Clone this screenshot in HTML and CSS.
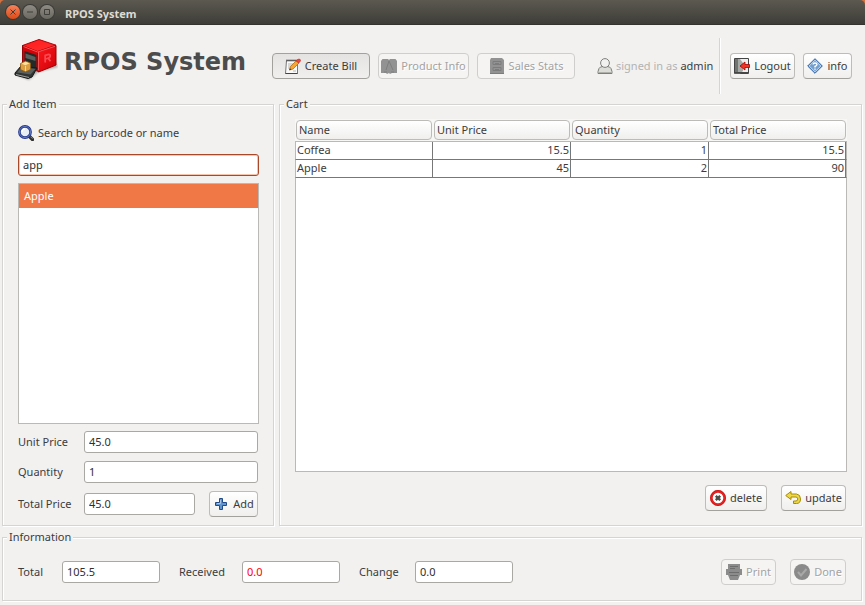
FILE: index.html
```html
<!DOCTYPE html>
<html lang="en">
<head>
<meta charset="utf-8">
<title>RPOS System</title>
<link rel="stylesheet" href="styles.css">
</head>
<body>
<div class="titlebar">
  <div class="titlebar-inner">
    <button class="win win-close" type="button" aria-label="Close"><svg viewBox="0 0 14 14"><path d="M4.500 4.500l5 5M9.500 4.500l-5 5"/></svg></button>
    <button class="win" type="button" aria-label="Minimize"><svg viewBox="0 0 14 14"><path d="M4 7h6"/></svg></button>
    <button class="win" type="button" aria-label="Maximize"><svg viewBox="0 0 14 14"><path d="M4.500 4.500h5v5h-5z"/></svg></button>
    <span class="titlebar-text">RPOS System</span>
  </div>
</div>

<header class="header">
  <div class="brand">
    <svg class="logo" viewBox="0 0 44 44">
      <defs>
        <linearGradient id="lt" x1="0" y1="0" x2="1" y2="1"><stop offset="0" stop-color="#ff1c1c"/><stop offset="1" stop-color="#ff2f2f"/></linearGradient>
        <linearGradient id="lr" x1="0" y1="0" x2="1" y2="1"><stop offset="0" stop-color="#ff1a1e"/><stop offset="1" stop-color="#cc0007"/></linearGradient>
        <filter id="soft" x="-20%" y="-20%" width="140%" height="140%"><feGaussianBlur stdDeviation="1"/></filter>
      </defs>
      <path d="M2 37l13 5 9-8 20-5-3-5-20 3-12 2z" fill="#888" opacity=".7" filter="url(#soft)"/>
      <path d="M8.500 7.500l15 5.500 1 20.500-5-2-11-4z" fill="#d30309" stroke="#930006"/>
      <path d="M10.500 13l12 4v15l-12-6z" fill="#232a28"/>
      <path d="M11.500 15.500l10 3.500v4l-10-3z" fill="#59605e"/>
      <path d="M23.500 13.500L42 7.500v19.500L24.500 34z" fill="url(#lr)" stroke="#a00004"/>
      <path d="M8.500 7.500L25 1.500 42 7.200 23.500 13.500z" fill="url(#lt)" stroke="#b00006"/>
      <path d="M9.500 8.500l14 5.500L41 8.300M24.500 14v18.500" fill="none" stroke="#ff6a6a" stroke-width=".8"/>
      <path d="M31.200 24.500V17.500l3.300-1.200q2 0 1.700 2-.4 1.500-2 2l2.300 3M31.500 21l3-1" fill="none" stroke="#ff4850" stroke-width="1.800"/>
      <path d="M1 35l6-7 16 2-5 9-4 1.500L1 37z" fill="#303332" stroke="#171918"/>
      <path d="M3 34.500l4.500-5.500 14 2-5 5.500z" fill="#5a5f5d"/>
      <path d="M2 36.500l13 3" stroke="#9a9e9c"/>
      <path d="M6.500 25.500l5-2.500 5 2v6.500l-5 2.500-5-2.500z" fill="#dca043" stroke="#8e5c12" stroke-width=".8"/>
      <path d="M7.500 25.700l4-2 4 1.600-4 2z" fill="#ffe0a0"/>
      <path d="M11.500 28v5" stroke="#ffd891"/>
    </svg>
    <h1>RPOS System</h1>
  </div>
  <nav class="nav">
    <button class="btn btn-main pressed" type="button">
      <svg class="icon" viewBox="0 0 16 16"><path d="M1.500 2.500h11v13h-12z" fill="#fafafa" stroke="#777"/><path d="M1.500 2.500h11" stroke="#444" stroke-width="2" stroke-dasharray="1 1"/><path d="M3 6h7M3 8h6M3 10h3M8 13h3" stroke="#b5b5b5"/><path d="M.5 15.500h12" stroke="#444"/><path d="M4.500 12l1-3.500 6-6 2.500 2.500-6 6z" fill="#f7a634" stroke="#b56e14" stroke-width=".8"/><path d="M4.300 12.200l.6-2 1.500 1.300z" fill="#333"/><path d="M11 3l2-1.800q2.500-.7 2.700 1.500L13.800 5z" fill="#e64848" stroke="#bf2929" stroke-width=".6"/></svg>
      Create Bill</button>
    <button class="btn btn-product" type="button" disabled>
      <svg class="icon" viewBox="0 0 16 16"><path d="M0 3l1.500-2H7l1 1 1-1h5.500L16 3v12h-5l-2 1-1-1-2 1-1-1H0z" fill="#929292"/><path d="M8 3L5 12M8 3l4 9M3 14h3M10 14h3" stroke="#7e7e7e"/></svg>
      Product Info</button>
    <button class="btn btn-main" type="button" disabled>
      <svg class="icon" viewBox="0 0 16 16"><path d="M2 0h11l2 2v14H1V2z" fill="#929292"/><path d="M4 3.500h8v3H4zM4 9.500h8v3H4z" fill="none" stroke="#7c7c7c"/><path d="M6 5.500h4M6 11.500h4M1 15.500h14" stroke="#7c7c7c"/></svg>
      Sales Stats</button>
    <div class="user">
      <svg class="icon" viewBox="0 0 16 16"><path d="M2 10.500Q3 8.500 6 8.500h4q3 0 4 2l1 3v2H1v-2z" fill="#dcdcd8" stroke="#7d7f7a"/><circle cx="8" cy="5" r="4.400" fill="#f1f1ef" stroke="#7d7f7a"/><path d="M2 14.500h12" stroke="#b0b0ab"/></svg>
      <span class="muted">signed in as</span><span class="user-name">admin</span>
    </div>
    <div class="divider"></div>
    <button class="btn btn-logout" type="button">
      <svg class="icon" viewBox="0 0 16 16"><path d="M.5.500h14v15H.5z" fill="#eee" stroke="#444"/><path d="M1 1h5l3 4v8l-3 2.500H1z" fill="#a5a9a5"/><path d="M1 1h3v14H1z" fill="#70746f"/><path d="M1 14h13v1.500H1z" fill="#454845"/><path d="M6 8l5-4v2.500h4.500v3H11V12z" fill="#ef3525" stroke="#a40000" stroke-width=".8"/></svg>
      Logout</button>
    <button class="btn btn-info" type="button">
      <svg class="icon" viewBox="0 0 16 16"><path d="M8 .7L15.300 8 8 15.300.7 8z" fill="#729fcf" stroke="#3465a4"/><path d="M8 2.200L13.800 8 8 13.800 2.200 8z" fill="none" stroke="#c3d8ee"/><path d="M6 6.500Q6.200 5 8 5t2 1.500Q10 7.500 8 8.500V9.500M8 10.500v1.200" fill="none" stroke="#fff" stroke-width="1.400"/></svg>
      info</button>
  </nav>
</header>

<main class="main">
  <fieldset class="group add-item">
    <legend>Add Item</legend>
    <label class="search-label" for="search">
      <svg class="icon" viewBox="0 0 16 16"><path d="M11.500 11.500l3 3" stroke="#2e3030" stroke-width="3.400" stroke-linecap="round"/><path d="M12.500 11.700l2 2" stroke="#8a8d88"/><circle cx="7" cy="7" r="5.600" fill="#e9eef5" stroke="#24388b" stroke-width="2.600"/><circle cx="7" cy="7" r="5.600" fill="none" stroke="#6f86cf" stroke-width=".8"/><path d="M4 7q0-3 3-3.300" fill="none" stroke="#fff" stroke-width="1.400"/></svg>
      Search by barcode or name</label>
    <input class="field search" id="search" type="text" value="app">
    <ul class="list"><li class="selected">Apple</li></ul>
    <div class="form">
      <label for="unit">Unit Price</label><input class="field wide" id="unit" type="text" value="45.0">
      <label for="qty">Quantity</label><input class="field wide" id="qty" type="text" value="1">
      <label for="price">Total Price</label><input class="field" id="price" type="text" value="45.0">
      <button class="btn btn-add" type="button">
        <svg class="icon" viewBox="0 0 16 16"><path d="M6.500 2.500h3v4h4v3h-4v4h-3v-4h-4v-3h4z" fill="#5f94cc" stroke="#204a87" stroke-linejoin="round"/><path d="M7.500 4v3.500H4" fill="none" stroke="#a5c6e8"/></svg>
        Add</button>
    </div>
  </fieldset>

  <fieldset class="group cart">
    <legend>Cart</legend>
    <div class="cart-view">
      <table class="cart-table">
        <thead>
          <tr><th><span>Name</span></th><th><span>Unit Price</span></th><th><span>Quantity</span></th><th><span>Total Price</span></th></tr>
        </thead>
        <tbody>
          <tr><td>Coffea</td><td>15.5</td><td>1</td><td>15.5</td></tr>
          <tr><td>Apple</td><td>45</td><td>2</td><td>90</td></tr>
        </tbody>
      </table>
      <div class="cart-rest"></div>
    </div>
    <div class="actions">
      <button class="btn btn-delete" type="button">
        <svg class="icon" viewBox="0 0 16 16"><circle cx="8" cy="8" r="6.600" fill="#fff" stroke="#e62222" stroke-width="2.600"/><circle cx="8" cy="8" r="7.600" fill="none" stroke="#b80b0b" stroke-width=".6"/><path d="M5.800 5.800l4.400 4.400M10.200 5.800l-4.400 4.400" stroke="#4a4d4a" stroke-width="2.400"/></svg>
        delete</button>
      <button class="btn btn-update" type="button">
        <svg class="icon" viewBox="0 0 16 16"><path d="M.7 5.500L6 1.500v2.500h5.500q4 .5 4 5t-4 4.500H8.500v-2.500H11q1.800-.2 1.800-2T11 7H6v2.500z" fill="#edd84a" stroke="#a88a00" stroke-linejoin="round"/></svg>
        update</button>
    </div>
  </fieldset>
</main>

<fieldset class="group info">
  <legend>Information</legend>
  <div class="info-row">
    <label class="label-total" for="total">Total</label><input class="field sum" id="total" type="text" value="105.5">
    <label class="label-received" for="received">Received</label><input class="field sum alert" id="received" type="text" value="0.0">
    <label class="label-change" for="change">Change</label><input class="field sum" id="change" type="text" value="0.0">
    <div class="info-actions">
      <button class="btn btn-print" type="button" disabled>
        <svg class="icon" viewBox="0 0 16 16"><path d="M2 0h12v5h2v6h-2l-2 5H4l-2-5H0V5h2z" fill="#8c8c8c"/><path d="M4 2.500h8M4 4.500h5M3 8.500h10M4 11.500h8" stroke="#6d6d6d"/></svg>
        Print</button>
      <button class="btn btn-done" type="button" disabled>
        <svg class="icon" viewBox="0 0 16 16"><circle cx="8" cy="8" r="8" fill="#8a8a8a"/><path d="M4 8l3 3.500L12.500 5" fill="none" stroke="#a8a8a8" stroke-width="2"/></svg>
        Done</button>
    </div>
  </div>
</fieldset>
</body>
</html>
```
FILE: styles.css
```css
* { box-sizing: border-box; }

body {
  margin: 0;
  min-height: 100vh;
  display: flex;
  flex-direction: column;
  background: #f2f1f0;
  color: #3c3c3c;
  font: 11px/14px "Noto Sans", "Open Sans", sans-serif;
}

button, input { font: inherit; color: inherit; }
h1, ul { margin: 0; padding: 0; }
ul { list-style: none; }

.titlebar { background: #d4703f; }
.titlebar-inner {
  height: 25px;
  display: flex;
  align-items: center;
  gap: 3px;
  padding: 0 6px;
  border-radius: 5px 5px 0 0;
  background: linear-gradient(#5b5950, #3e3d38);
  border-bottom: 1px solid #34332f;
}
.win {
  width: 14px;
  height: 14px;
  padding: 0;
  border: 0;
  border-radius: 50%;
  background: linear-gradient(#8d8b83, #6a6861);
  box-shadow: 0 0 0 1px #3b3a35;
}
.win svg { display: block; fill: none; stroke: #3f3e39; }
.win-close { background: linear-gradient(#f5825b, #df4a16); }
.titlebar-text { margin-left: 8px; padding-top: 3px; color: #dfdbd2; font-weight: bold; }

.header {
  display: flex;
  align-items: center;
  justify-content: space-between;
  padding: 13px 13px 3px 14px;
}
.brand { display: flex; align-items: center; gap: 6px; }
.logo { width: 44px; height: 44px; margin-bottom: 12px; }
h1 { margin-bottom: 9px; font: bold 24px/30px "DejaVu Sans", sans-serif; color: #4c4c4c; white-space: nowrap; }
.nav { display: flex; align-items: center; gap: 8px; }

.icon { width: 16px; height: 16px; flex: none; }
.btn {
  height: 26px;
  display: flex;
  align-items: center;
  justify-content: center;
  gap: 4px;
  padding: 0;
  border: 1px solid #bdbcb9;
  border-bottom-color: #a3a19d;
  border-radius: 4px;
  background: linear-gradient(#fff, #f0efee);
  white-space: nowrap;
}
.btn:disabled {
  border-color: #cfcecc;
  background: #f5f4f3;
  color: #a3a3a3;
  text-shadow: 1px 1px #fff;
}
.btn.pressed { border-color: #a3a19e; background: linear-gradient(#e4e3e1, #f0efed); }
.btn-main { width: 98px; }
.btn-product { width: 91px; }
.btn-logout { width: 65px; }
.btn-info { width: 49px; }
.btn-add { width: 49px; }
.btn-delete { width: 62px; }
.btn-update { width: 65px; }
.btn-print { width: 55px; }
.btn-done { width: 56px; }

.user { display: flex; align-items: center; gap: 3px; width: 114px; margin-left: 14px; white-space: nowrap; }
.muted { color: #b4b3b1; }
.user-name { margin-left: auto; }
.divider { width: 2px; height: 56px; margin-right: 1px; background: #d5d4d2; border-right: 1px solid #fff; }

.group {
  min-width: 0;
  margin: 0;
  border: 1px solid #d5d4d2;
  box-shadow: 1px 1px #fff, inset 1px 1px #fff;
}
.group legend { height: 14px; margin-left: -11px; padding: 0 2px; background: #f2f1f0; }

.main {
  flex: 1;
  display: grid;
  grid-template-columns: 272px 1fr;
  gap: 5px;
  padding: 0 3px 0 2px;
}
.add-item, .cart { display: flex; flex-direction: column; }
.add-item { padding: 14px 14px 8px 15px; }
.search-label { display: flex; align-items: center; gap: 4px; }
.field {
  width: 100%;
  min-width: 0;
  height: 22px;
  padding: 0 4px 2px;
  border: 1px solid #aaa8a3;
  border-radius: 3px;
  background: #fff;
  color: #303030;
}
.search { margin: 13px 0 7px; padding: 0 4px 2px; border-color: #a8492a; box-shadow: inset 0 0 0 1px #f6c4ac; }
.list { flex: 1; border: 1px solid #bab9b5; background: #fff; }
.selected { height: 24px; padding: 0 5px; background: #f07746; color: #fff; line-height: 24px; }
.form {
  display: grid;
  grid-template-columns: 66px 1fr 49px;
  row-gap: 8px;
  align-items: center;
  margin: 7px 1px 0 0;
}
.wide { grid-column: span 2; }
#price { width: calc(100% - 14px); }

.cart { padding: 8px 14px 14px 15px; }
.cart-view { flex: 1; display: flex; flex-direction: column; }
.cart-table { width: 100%; table-layout: fixed; border-spacing: 0; }
.cart-table th { padding: 1px; background: #f7f7f6; border-bottom: 1px solid #bab9b5; font-weight: normal; text-align: left; }
.cart-table th span {
  display: block;
  height: 20px;
  padding: 0 2px;
  border: 1px solid #bcbbb8;
  border-radius: 4px;
  background: linear-gradient(#fff, #f0efee);
  line-height: 18px;
}
.cart-table td {
  height: 18px;
  padding: 0 1px 2px;
  border-right: 1px solid #777;
  border-bottom: 1px solid #777;
  background: #fff;
  line-height: 15px;
  text-align: right;
}
.cart-table td:first-child { border-left: 1px solid #bab9b5; text-align: left; }
.cart-table td:last-child { border-right-color: #bab9b5; padding-right: 2px; box-shadow: inset -1px 0 #777; }
.cart-rest { flex: 1; border: 1px solid #bab9b5; border-top: 0; background: #fff; }
.actions { display: flex; justify-content: flex-end; gap: 14px; margin: 13px 1px 0 0; }

.info { margin: 4px 3px 4px 2px; padding: 15px; }
.info-row { display: flex; align-items: center; }
.label-total { width: 44px; }
.label-received { width: 63px; }
.label-change { width: 56px; }
.sum { width: 98px; margin-right: 19px; }
.alert { color: #f00; }
.info-actions { display: flex; gap: 14px; margin-left: auto; }
```
